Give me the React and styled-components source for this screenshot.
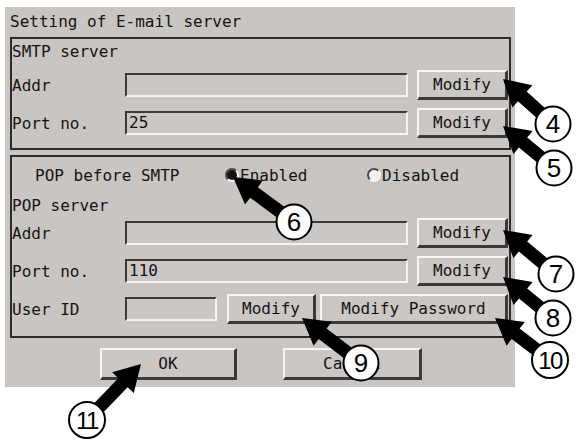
import React from 'react';
import styled, { createGlobalStyle } from 'styled-components';

const GlobalStyle = createGlobalStyle`
  html, body { margin: 0; padding: 0; background: #ffffff; }
  body { font-family: "DejaVu Sans Mono", "Liberation Mono", monospace; color: #141414; }
`;

const Page = styled.div`
  position: relative;
  width: 576px;
  height: 441px;
  background: #ffffff;
  overflow: hidden;
`;

const Panel = styled.div`
  margin: 7px 0 0 5px;
  width: 510px;
  height: 380px;
  box-sizing: border-box;
  padding: 0 4px 7px 5px;
  background: #c8c5c2;
  display: flex;
  flex-direction: column;
  font-size: 16px;
`;

const Title = styled.div`
  height: 30px;
  line-height: 30px;
  white-space: pre;
`;

const Group = styled.div`
  border: 2px solid #2c2c2c;
  display: flex;
  flex-direction: column;
  padding: 0 1px ${p => p.$padBottom}px 0;
  margin-top: ${p => p.$top || 0}px;
`;

const SectionHead = styled.div`
  height: ${p => p.$h}px;
  line-height: ${p => p.$lh}px;
  white-space: pre;
`;

const Rows = styled.div`
  display: flex;
  flex-direction: column;
  gap: 8px;
`;

const Row = styled.div`
  display: flex;
  align-items: center;
  height: 30px;
`;

const Label = styled.div`
  width: 113px;
  flex: none;
  white-space: pre;
`;

const Field = styled.div`
  width: ${p => p.$w}px;
  height: 24px;
  box-sizing: border-box;
  flex: none;
  border-style: solid;
  border-width: 2px;
  border-color: #3a3a3a #f3f3f3 #f3f3f3 #3a3a3a;
  background: #cac7c4;
  padding-left: 2px;
  line-height: 20px;
  margin-right: ${p => p.$gap}px;
`;

const Button = styled.div`
  width: ${p => p.$w}px;
  height: ${p => p.$h || 30}px;
  box-sizing: border-box;
  flex: none;
  border-style: solid;
  border-width: 2px 3px 3px 2px;
  border-color: #f6f6f6 #3a3a3a #3a3a3a #f6f6f6;
  background: #cac7c4;
  display: flex;
  align-items: center;
  justify-content: center;
  white-space: pre;
  margin-right: ${p => p.$gap || 0}px;
`;

const RadioRow = styled.div`
  display: flex;
  align-items: center;
  height: 36px;
`;

const RadioCaption = styled.div`
  width: 190px;
  padding-left: 23px;
  flex: none;
  white-space: pre;
`;

const RadioOption = styled.div`
  width: ${p => p.$w}px;
  flex: none;
  display: flex;
  align-items: center;
  gap: 1px;
`;

const RadioDot = styled.span`
  width: 14px;
  height: 14px;
  box-sizing: border-box;
  border-radius: 50%;
  border-style: solid;
  border-width: 2px;
  border-color: #4a4a4a #f4f4f4 #f4f4f4 #4a4a4a;
  background: ${p => (p.$on ? '#111' : '#f1f1f1')};
  box-shadow: ${p => (p.$on ? 'inset 0 0 0 1px #222' : 'none')};
`;

const ButtonBar = styled.div`
  display: flex;
  gap: 46px;
  padding-left: 90px;
  margin-top: 10px;
`;

const Overlay = styled.svg`
  position: absolute;
  left: 0;
  top: 0;
  pointer-events: none;
`;

const callouts = [
  { n: '4', tip: [503, 79], c: [553, 124] },
  { n: '5', tip: [503, 126], c: [554, 168] },
  { n: '6', tip: [233, 177], c: [294, 222] },
  { n: '7', tip: [503, 230], c: [556, 274] },
  { n: '8', tip: [503, 277], c: [553, 318] },
  { n: '9', tip: [302, 318], c: [361, 363] },
  { n: '10', tip: [495, 318], c: [550, 360] },
  { n: '11', tip: [141, 364], c: [87, 420] },
];

function arrowPoints(tail, tip, shaft = 6.5, headW = 15, headL = 26) {
  const dx = tip[0] - tail[0];
  const dy = tip[1] - tail[1];
  const L = Math.hypot(dx, dy);
  const ux = dx / L;
  const uy = dy / L;
  const px = -uy;
  const py = ux;
  const bx = tip[0] - ux * headL;
  const by = tip[1] - uy * headL;
  const pts = [
    [tail[0] + px * shaft, tail[1] + py * shaft],
    [bx + px * shaft, by + py * shaft],
    [bx + px * headW, by + py * headW],
    tip,
    [bx - px * headW, by - py * headW],
    [bx - px * shaft, by - py * shaft],
    [tail[0] - px * shaft, tail[1] - py * shaft],
  ];
  return pts.map(p => p.map(v => v.toFixed(1)).join(',')).join(' ');
}

function Callouts() {
  return (
    <Overlay width="576" height="441" viewBox="0 0 576 441">
      {callouts.map(a => (
        <polygon key={'a' + a.n} points={arrowPoints(a.c, a.tip)} fill="#000" />
      ))}
      {callouts.map(a => {
        const two = a.n.length > 1;
        return (
          <g key={'c' + a.n}>
            <circle cx={a.c[0]} cy={a.c[1]} r={two ? 18 : 17.5} fill="#fff" stroke="#000" strokeWidth="2" />
            <text
              x={a.c[0]}
              y={a.c[1] + 9}
              textAnchor="middle"
              fontFamily='"Liberation Sans", Arial, sans-serif'
              fontSize={two ? 24 : 26}
              letterSpacing={two ? -1.5 : 0}
              fill="#000"
            >
              {a.n}
            </text>
          </g>
        );
      })}
    </Overlay>
  );
}

export default function App() {
  return (
    <Page>
      <GlobalStyle />
      <Panel>
        <Title>Setting of E-mail server</Title>
        <Group $padBottom={10}>
          <SectionHead $h={31} $lh={26}>SMTP server</SectionHead>
          <Rows>
            <Row>
              <Label>Addr</Label>
              <Field $w={283} $gap={9} />
              <Button $w={91}>Modify</Button>
            </Row>
            <Row>
              <Label>Port no.</Label>
              <Field $w={283} $gap={9}>25</Field>
              <Button $w={91}>Modify</Button>
            </Row>
          </Rows>
        </Group>
        <Group $padBottom={12} $top={5}>
          <RadioRow>
            <RadioCaption>POP before SMTP</RadioCaption>
            <RadioOption $w={142}>
              <RadioDot $on />
              <span>Enabled</span>
            </RadioOption>
            <RadioOption $w={120}>
              <RadioDot />
              <span>Disabled</span>
            </RadioOption>
          </RadioRow>
          <SectionHead $h={25} $lh={25}>POP server</SectionHead>
          <Rows>
            <Row>
              <Label>Addr</Label>
              <Field $w={283} $gap={9} />
              <Button $w={91}>Modify</Button>
            </Row>
            <Row>
              <Label>Port no.</Label>
              <Field $w={283} $gap={9}>110</Field>
              <Button $w={91}>Modify</Button>
            </Row>
            <Row>
              <Label>User ID</Label>
              <Field $w={92} $gap={10} />
              <Button $w={89} $gap={4}>Modify</Button>
              <Button $w={188}>Modify Password</Button>
            </Row>
          </Rows>
        </Group>
        <ButtonBar>
          <Button $w={137} $h={32}>OK</Button>
          <Button $w={139} $h={32}>Cancel</Button>
        </ButtonBar>
      </Panel>
      <Callouts />
    </Page>
  );
}
